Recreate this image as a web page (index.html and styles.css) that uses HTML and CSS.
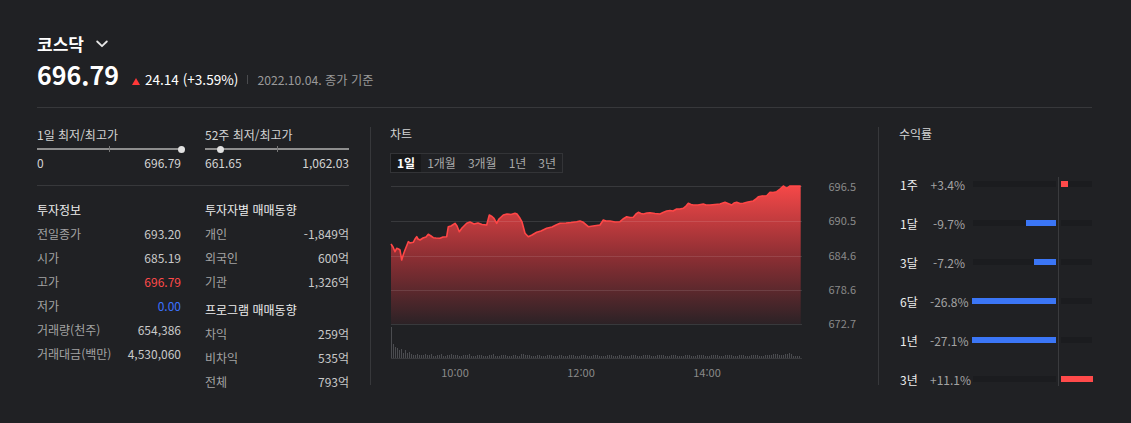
FILE: index.html
```html
<!DOCTYPE html>
<html lang="ko">
<head>
<meta charset="utf-8">
<title>코스닥</title>
<link rel="stylesheet" href="styles.css">
</head>
<body>
<div class="page">
  <header class="head">
    <div class="title-row">
      <h1 class="title">코스닥</h1>
      <svg class="chev" viewBox="0 0 12 8" aria-hidden="true"><polyline points="1.2,1.5 6,6.2 10.8,1.5" fill="none" stroke="#e6e6e6" stroke-width="1.8" stroke-linecap="round" stroke-linejoin="round"/></svg>
    </div>
    <div class="price-row">
      <span class="price">696.79</span>
      <span class="change"><span class="tri"></span>24.14 (+3.59%)</span>
      <span class="sep"></span>
      <span class="date">2022.10.04. 종가 기준</span>
    </div>
  </header>

  <main class="content">
    <section class="info">
      <div class="ranges">
        <div class="range">
          <div class="range-title">1일 최저/최고가</div>
          <div class="slider"><span class="track"></span><span class="tick"></span><span class="knob" style="left:100%"></span></div>
          <div class="range-vals"><span>0</span><span>696.79</span></div>
        </div>
        <div class="range">
          <div class="range-title">52주 최저/최고가</div>
          <div class="slider"><span class="track"></span><span class="tick"></span><span class="knob" style="left:10.5%"></span></div>
          <div class="range-vals"><span>661.65</span><span>1,062.03</span></div>
        </div>
      </div>
      <div class="tables">
        <div class="tcol">
          <h3 class="sub">투자정보</h3>
          <div class="kv"><span class="k">전일종가</span><span class="v">693.20</span></div>
          <div class="kv"><span class="k">시가</span><span class="v">685.19</span></div>
          <div class="kv"><span class="k">고가</span><span class="v red">696.79</span></div>
          <div class="kv"><span class="k">저가</span><span class="v blue">0.00</span></div>
          <div class="kv"><span class="k">거래량(천주)</span><span class="v">654,386</span></div>
          <div class="kv"><span class="k">거래대금(백만)</span><span class="v">4,530,060</span></div>
        </div>
        <div class="tcol">
          <h3 class="sub">투자자별 매매동향</h3>
          <div class="kv"><span class="k">개인</span><span class="v">-1,849억</span></div>
          <div class="kv"><span class="k">외국인</span><span class="v">600억</span></div>
          <div class="kv"><span class="k">기관</span><span class="v">1,326억</span></div>
          <h3 class="sub sub2">프로그램 매매동향</h3>
          <div class="kv"><span class="k">차익</span><span class="v">259억</span></div>
          <div class="kv"><span class="k">비차익</span><span class="v">535억</span></div>
          <div class="kv"><span class="k">전체</span><span class="v">793억</span></div>
        </div>
      </div>
    </section>

    <section class="chart">
      <h3 class="ptitle">차트</h3>
      <div class="tabs">
        <span class="tab on">1일</span>
        <span class="tab">1개월</span>
        <span class="tab">3개월</span>
        <span class="tab">1년</span>
        <span class="tab">3년</span>
      </div>
      <svg class="plot" width="467" height="200" viewBox="391 180 467 200">
        <defs>
          <linearGradient id="fillg" gradientUnits="userSpaceOnUse" x1="0" y1="186" x2="0" y2="324">
            <stop offset="0" stop-color="#f54848"/>
            <stop offset="0.5" stop-color="#8f2f34"/>
            <stop offset="1" stop-color="#2c2226"/>
          </linearGradient>
          <pattern id="volp" patternUnits="userSpaceOnUse" x="391" y="0" width="2" height="400">
            <rect x="0" y="0" width="1" height="400" fill="#4b4c50"/>
          </pattern>
        </defs>
        <path d="M391 244 L393 247 L395 251.7 L396.7 248.3 L398.5 249 L400 250 L401.7 260 L403.5 254 L405 250 L408.3 241.7 L410 243 L413.3 242.3 L415 239 L416.7 236.7 L418 239 L420 240 L423 238 L426 237 L428.3 234.3 L431 236 L433.3 237.7 L436 238 L440 238.3 L443 237 L446.7 236.7 L448.3 226.7 L451 226 L455 223.3 L457 226 L459.3 231.7 L462 228 L466.7 223.3 L470 222 L474 224 L478 223 L482 224.5 L486.7 225 L489.3 215 L492 216.5 L494 218.3 L496.7 223.3 L499 219 L503.3 215 L507 214 L511 214.5 L515 213.3 L517 214 L520 218.3 L522 222 L525 233.3 L528.3 236.7 L532 235 L536.7 232.3 L541 231 L546.7 228.3 L552 227 L556 225 L560 223.3 L566 223 L571 222.5 L576.7 221.7 L580 221 L583.3 222.3 L588.3 226.7 L593 226 L600 225 L603.3 220 L606 221 L610 221 L615 222 L620 221.7 L623 219 L626.7 216.7 L630 217.5 L633.3 217.3 L636 214 L638.3 212.3 L641 213.5 L643.3 214 L647 213 L650 212.7 L655 213.5 L660 214 L663 212.5 L666.7 211 L670 210.5 L673 211 L676.7 209 L680 209 L683.3 208.3 L686 206 L688.3 203.3 L691 204.5 L693.3 205 L698 205 L703.3 204 L706 205 L710 205 L715 204.5 L720 204 L725 202.3 L728 203.5 L731.7 205 L734 203 L736.7 202.3 L740 203.5 L743.3 203.3 L748 202 L753.3 201 L756 199 L758.3 196.7 L762 196 L766.7 195.7 L770 192.3 L773 192.5 L776.7 191.7 L780 189 L783.3 186 L786.7 188.3 L790 186 L795 186 L800.7 186 L800.7 324 L391 324 Z" fill="url(#fillg)"/>
        <g stroke="#ffffff" stroke-opacity="0.11" stroke-width="1">
          <line x1="391" y1="186.5" x2="802" y2="186.5"/>
          <line x1="391" y1="221.5" x2="802" y2="221.5"/>
          <line x1="391" y1="256.5" x2="802" y2="256.5"/>
          <line x1="391" y1="290.5" x2="802" y2="290.5"/>
          <line x1="391" y1="324.5" x2="802" y2="324.5"/>
          <line x1="391" y1="358.5" x2="802" y2="358.5"/>
        </g>
        <path d="M391 244 L393 247 L395 251.7 L396.7 248.3 L398.5 249 L400 250 L401.7 260 L403.5 254 L405 250 L408.3 241.7 L410 243 L413.3 242.3 L415 239 L416.7 236.7 L418 239 L420 240 L423 238 L426 237 L428.3 234.3 L431 236 L433.3 237.7 L436 238 L440 238.3 L443 237 L446.7 236.7 L448.3 226.7 L451 226 L455 223.3 L457 226 L459.3 231.7 L462 228 L466.7 223.3 L470 222 L474 224 L478 223 L482 224.5 L486.7 225 L489.3 215 L492 216.5 L494 218.3 L496.7 223.3 L499 219 L503.3 215 L507 214 L511 214.5 L515 213.3 L517 214 L520 218.3 L522 222 L525 233.3 L528.3 236.7 L532 235 L536.7 232.3 L541 231 L546.7 228.3 L552 227 L556 225 L560 223.3 L566 223 L571 222.5 L576.7 221.7 L580 221 L583.3 222.3 L588.3 226.7 L593 226 L600 225 L603.3 220 L606 221 L610 221 L615 222 L620 221.7 L623 219 L626.7 216.7 L630 217.5 L633.3 217.3 L636 214 L638.3 212.3 L641 213.5 L643.3 214 L647 213 L650 212.7 L655 213.5 L660 214 L663 212.5 L666.7 211 L670 210.5 L673 211 L676.7 209 L680 209 L683.3 208.3 L686 206 L688.3 203.3 L691 204.5 L693.3 205 L698 205 L703.3 204 L706 205 L710 205 L715 204.5 L720 204 L725 202.3 L728 203.5 L731.7 205 L734 203 L736.7 202.3 L740 203.5 L743.3 203.3 L748 202 L753.3 201 L756 199 L758.3 196.7 L762 196 L766.7 195.7 L770 192.3 L773 192.5 L776.7 191.7 L780 189 L783.3 186 L786.7 188.3 L790 186 L795 186 L800.7 186" fill="none" stroke="#ff4646" stroke-width="1.6" stroke-linejoin="round"/>
        <path d="M391 358 V327 H392 V341 H393 V344 H394 V342 H395 V347 H396 V349 H397 V348 H399 V350 H400 V352 H401 V349 H403 V353 H404 V350 H406 V353 H408 V352 H410 V354 H412 V352 H413 V355 H416 V354 H418 V355 H420 V353 H421 V355 H425 V354 H427 V355 H430 V354 H432 V356 H436 V355 H440 V354 H442 V356 H446 V355 H450 V354 H452 V355 H458 V356 H462 V355 H468 V354 H470 V356 H476 V355 H482 V356 H488 V355 H492 V354 H494 V356 H500 V355 H506 V356 H512 V355 H516 V356 H520 V354 H524 V355 H530 V356 H536 V355 H540 V356 H546 V355 H552 V356 H558 V355 H562 V356 H568 V355 H574 V356 H580 V355 H586 V356 H592 V355 H598 V356 H606 V355 H612 V356 H618 V355 H622 V356 H630 V355 H636 V356 H642 V355 H650 V356 H656 V355 H664 V356 H670 V355 H676 V356 H684 V355 H690 V356 H696 V355 H704 V356 H710 V355 H718 V356 H724 V355 H732 V356 H738 V355 H744 V356 H750 V355 H758 V356 H764 V355 H772 V354 H778 V355 H784 V354 H788 V353 H790 V351 H791 V354 H793 V356 H800 V358 Z" fill="url(#volp)"/>
        <g class="axis" font-size="11" fill="#8a8a8a" text-anchor="end">
          <text x="856" y="191">696.5</text>
          <text x="856" y="225">690.5</text>
          <text x="856" y="260">684.6</text>
          <text x="856" y="294">678.6</text>
          <text x="856" y="328">672.7</text>
        </g>
        <g class="axis" font-size="11" fill="#8a8a8a" text-anchor="middle">
          <text x="455" y="377">10:00</text>
          <text x="581" y="377">12:00</text>
          <text x="707" y="377">14:00</text>
        </g>
      </svg>
    </section>

    <section class="returns">
      <h3 class="ptitle">수익률</h3>
      <div class="rlist">
        <div class="rrow"><span class="rl">1주</span><span class="rp">+3.4%</span><div class="rbars"><span class="neg"></span><span class="pos"><i class="up" style="width:7px"></i></span></div></div>
        <div class="rrow"><span class="rl">1달</span><span class="rp">-9.7%</span><div class="rbars"><span class="neg"><i class="dn" style="width:30px"></i></span><span class="pos"></span></div></div>
        <div class="rrow"><span class="rl">3달</span><span class="rp">-7.2%</span><div class="rbars"><span class="neg"><i class="dn" style="width:22px"></i></span><span class="pos"></span></div></div>
        <div class="rrow"><span class="rl">6달</span><span class="rp">-26.8%</span><div class="rbars"><span class="neg"><i class="dn" style="width:84px"></i></span><span class="pos"></span></div></div>
        <div class="rrow"><span class="rl">1년</span><span class="rp">-27.1%</span><div class="rbars"><span class="neg"><i class="dn" style="width:84px"></i></span><span class="pos"></span></div></div>
        <div class="rrow"><span class="rl">3년</span><span class="rp">+11.1%</span><div class="rbars"><span class="neg"></span><span class="pos"><i class="up" style="width:32px"></i></span></div></div>
      </div>
    </section>
  </main>
</div>
</body>
</html>
```

FILE: styles.css
```css
* {
  box-sizing: border-box;
  margin: 0;
  padding: 0;
}

html,
body {
  background: #202124;
}

body {
  width: 1131px;
  height: 423px;
  overflow: hidden;
  font-family: "Noto Sans CJK KR", "Noto Sans", sans-serif;
  color: #e8e8e8;
}

.page {
  padding: 32px 39px 0 37px;
}

/* header */
.head {
  border-bottom: 1px solid #37383b;
  padding-bottom: 18px;
}

.title-row {
  display: flex;
  align-items: center;
  gap: 12px;
  height: 24px;
}

.title {
  font-size: 17px;
  font-weight: 700;
  line-height: 24px;
  color: #ffffff;
}

.chev {
  width: 12px;
  height: 8px;
  display: block;
}

.price-row {
  display: flex;
  align-items: baseline;
  margin-top: 3px;
  height: 30px;
  line-height: 30px;
}

.price {
  font-size: 25px;
  font-weight: 700;
  color: #ffffff;
}

.change {
  font-size: 13.6px;
  color: #ffffff;
}

.tri {
  display: inline-block;
  width: 0;
  height: 0;
  border-left: 4px solid transparent;
  border-right: 4px solid transparent;
  border-bottom: 7px solid #ff3838;
  margin-left: 13px;
  margin-right: 5px;
}

.sep {
  display: inline-block;
  width: 1px;
  height: 9px;
  background: #4a4b4e;
  margin: 0 9px;
  position: relative;
  top: -1px;
}

.date {
  font-size: 12.2px;
  color: #9a9a9a;
}

/* content */
.content {
  display: flex;
  margin-top: 19px;
  height: 258px;
}

.info {
  width: 334px;
  flex: 0 0 334px;
  padding-right: 21px;
  border-right: 1px solid #37383b;
}

.chart {
  width: 508px;
  flex: 0 0 508px;
  padding: 0 21px 0 19px;
  border-right: 1px solid #37383b;
}

.returns {
  flex: 1;
  padding-left: 20px;
}

/* ranges */
.ranges {
  display: grid;
  grid-template-columns: 144px 144px;
  column-gap: 24px;
  padding-bottom: 14px;
  border-bottom: 1px solid #37383b;
}

.range-title {
  font-size: 12px;
  line-height: 16px;
  color: #d4d4d4;
}

.slider {
  position: relative;
  height: 12px;
}

.track {
  position: absolute;
  left: 0;
  right: 0;
  top: 5px;
  height: 2px;
  background: #8e8e8e;
}

.tick {
  position: absolute;
  left: 72px;
  top: 3px;
  width: 1px;
  height: 6px;
  background: #777777;
}

.knob {
  position: absolute;
  top: 3px;
  width: 7px;
  height: 7px;
  margin-left: -3px;
  border-radius: 50%;
  background: #e2e2e2;
}

.range-vals {
  display: flex;
  justify-content: space-between;
  font-size: 12px;
  line-height: 16px;
  color: #d4d4d4;
}

/* tables */
.tables {
  display: grid;
  grid-template-columns: 144px 144px;
  column-gap: 24px;
  margin-top: 16px;
}

.sub {
  font-size: 12px;
  font-weight: 400;
  line-height: 16px;
  color: #ececec;
  margin-bottom: 4px;
}

.sub2 {
  margin-top: 8px;
}

.kv {
  display: flex;
  justify-content: space-between;
  font-size: 12px;
  line-height: 24px;
}

.k {
  color: #a3a3a3;
}

.v {
  color: #c9c9c9;
}

.v.red {
  color: #ff4a4a;
}

.v.blue {
  color: #3b72ff;
}

/* panel titles */
.ptitle {
  font-size: 12px;
  font-weight: 400;
  line-height: 14px;
  color: #d4d4d4;
}

/* chart */
.tabs {
  display: inline-flex;
  margin-top: 12px;
  height: 20px;
  border: 1px solid #333437;
}

.tab {
  padding: 0 6px;
  font-size: 12px;
  line-height: 18px;
  color: #a8a8a8;
}

.tab.on {
  background: #18191b;
  color: #ffffff;
  font-weight: 700;
}

.plot {
  display: block;
  margin-top: 7px;
  margin-left: 1px;
  overflow: visible;
}

.axis text {
  font-family: "Noto Sans CJK KR", "Noto Sans", sans-serif;
}

/* returns */
.rlist {
  position: relative;
  margin-top: 23.5px;
}

.rlist::before {
  content: "";
  position: absolute;
  left: 159px;
  top: 12px;
  width: 1px;
  height: 209px;
  background: #3a3b3e;
}

.rrow {
  display: flex;
  align-items: center;
  height: 39px;
}

.rl {
  width: 31px;
  padding-left: 1px;
  font-size: 12px;
  color: #ececec;
}

.rp {
  width: 35px;
  text-align: right;
  font-size: 12px;
  color: #a3a3a3;
}

.rbars {
  display: flex;
  gap: 5px;
  margin-left: 8px;
  height: 6px;
}

.neg {
  display: flex;
  justify-content: flex-end;
  width: 83px;
  height: 6px;
  background: #1b1c1f;
}

.pos {
  display: flex;
  width: 31px;
  height: 6px;
  background: #1b1c1f;
}

.dn,
.up {
  display: block;
  flex: 0 0 auto;
  height: 6px;
}

.dn {
  background: #3b76f6;
}

.up {
  background: #ff4a4a;
}
```
